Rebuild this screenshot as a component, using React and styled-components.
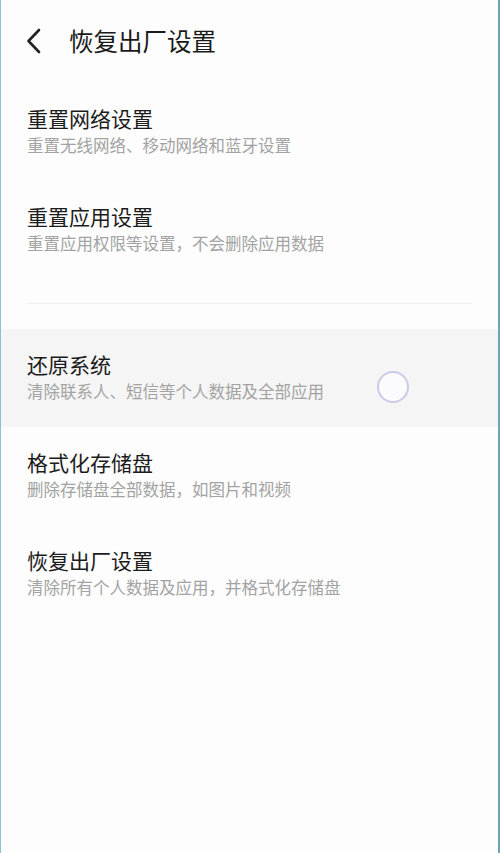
import React from "react";
import styled, { createGlobalStyle } from "styled-components";

const GlobalStyle = createGlobalStyle`
  html, body {
    margin: 0;
    padding: 0;
    background: #fcfdfc;
  }
  * {
    box-sizing: border-box;
  }
`;

const items = [
  { title: "重置网络设置", desc: "重置无线网络、移动网络和蓝牙设置" },
  { title: "重置应用设置", desc: "重置应用权限等设置，不会删除应用数据" },
];

const resetItems = [
  { title: "还原系统", desc: "清除联系人、短信等个人数据及全部应用", pressed: true },
  { title: "格式化存储盘", desc: "删除存储盘全部数据，如图片和视频" },
  { title: "恢复出厂设置", desc: "清除所有个人数据及应用，并格式化存储盘" },
];

function BackIcon() {
  return (
    <svg width="18" height="26" viewBox="0 0 18 26">
      <path
        d="M14 2 L3.5 13 L14 24"
        fill="none"
        stroke="#222"
        strokeWidth="2.6"
        strokeLinecap="round"
        strokeLinejoin="round"
      />
    </svg>
  );
}

function App() {
  return (
    <>
      <GlobalStyle />
      <Screen>
        <Header>
          <BackButton>
            <BackIcon />
          </BackButton>
          <Title>恢复出厂设置</Title>
        </Header>

        {items.map((item) => (
          <Row key={item.title}>
            <RowTitle>{item.title}</RowTitle>
            <RowDesc>{item.desc}</RowDesc>
          </Row>
        ))}

        <Divider />

        {resetItems.map((item) => (
          <Row key={item.title} $pressed={item.pressed}>
            <RowTitle>{item.title}</RowTitle>
            <RowDesc>{item.desc}</RowDesc>
            {item.pressed && <TouchRing />}
          </Row>
        ))}
      </Screen>
    </>
  );
}

const Screen = styled.div`
  width: 500px;
  height: 853px;
  background: #fcfdfc;
  border-left: 1px solid #8fc0d2;
  border-right: 2px solid #6ea2be;
  font-family: "Noto Sans CJK SC", "Noto Sans", sans-serif;
  overflow: hidden;
`;

const Header = styled.div`
  height: 83px;
  display: flex;
  align-items: center;
  padding-left: 24px;
  padding-bottom: 2px;
`;

const BackButton = styled.div`
  width: 44px;
  display: flex;
  align-items: center;
`;

const Title = styled.h1`
  margin: 0;
  font-size: 24.5px;
  font-weight: 400;
  color: #1a1a1a;
  line-height: 30px;
`;

const Row = styled.div`
  position: relative;
  height: 98px;
  display: flex;
  flex-direction: column;
  justify-content: center;
  padding-left: 26px;
  padding-bottom: 4px;
  background: ${(p) => (p.$pressed ? "#f4f5f4" : "transparent")};
`;

const RowTitle = styled.div`
  font-size: 21px;
  line-height: 26px;
  color: #1c1c1c;
`;

const RowDesc = styled.div`
  margin-top: 4px;
  font-size: 16.5px;
  line-height: 20px;
  color: #a3a3a3;
`;

const Divider = styled.div`
  height: 1px;
  margin: 24px 26px 25px 26px;
  background: #eff0ef;
`;

const TouchRing = styled.div`
  position: absolute;
  left: 376px;
  top: 42px;
  width: 32px;
  height: 32px;
  border-radius: 50%;
  border: 2px solid #c9cbe8;
  background: #fbfbfd;
`;

export default App;
